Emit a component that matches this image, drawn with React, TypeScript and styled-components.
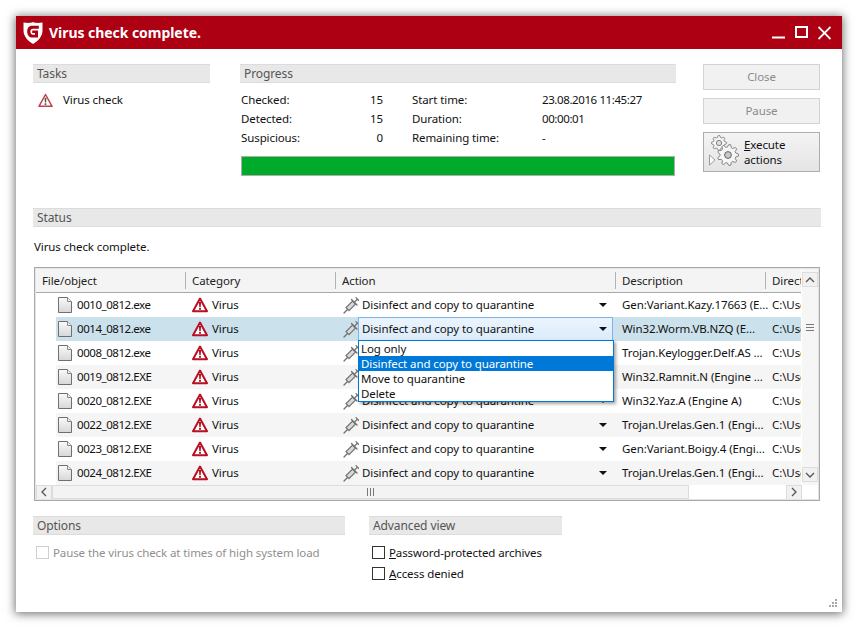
import React from "react";
import styled, { createGlobalStyle, css } from "styled-components";

const Global = createGlobalStyle`
  html, body { margin: 0; padding: 0; background: #fff; }
  body { font-family: "Noto Sans", "Open Sans", "Liberation Sans", sans-serif; font-size: 11.5px; letter-spacing: -0.1px; color: #111; }
  * { box-sizing: border-box; }
`;

const Page = styled.div`
  width: 858px;
  height: 628px;
  padding: 16px;
  overflow: hidden;
`;
const Win = styled.div`
  width: 826px;
  height: 596px;
  background: #fff;
  box-shadow: 0 1px 9px 1px rgba(0, 0, 0, 0.55);
  display: flex;
  flex-direction: column;
  position: relative;
`;
const TitleBar = styled.div`
  height: 33px;
  background: #ae0013;
  display: flex;
  align-items: center;
  padding: 0 11px 0 7px;
  color: #fff;
`;
const TitleText = styled.div`
  font-weight: 700;
  font-size: 14px;
  margin-left: 6px;
  flex: 1;
  letter-spacing: -0.05px;
`;
const WinBtns = styled.div`
  display: flex;
  align-items: center;
  gap: 10px;
`;
const Body = styled.div`
  flex: 1;
  padding: 15px 21px 0 17px;
  display: flex;
  flex-direction: column;
`;
const Top = styled.div`
  display: grid;
  grid-template-columns: 177px 436px 117px;
  column-gap: 30px;
  height: 144px;
`;
const RightCol = styled.div`
  width: 117px;
  margin-left: -3px;
`;
const SectionHead = styled.div<{ $w?: number }>`
  height: 19px;
  line-height: 17px;
  background: #e8e8e8;
  border-top: 1px solid #dcdcdc;
  border-bottom: 1px solid #dcdcdc;
  color: #555;
  padding-left: 4px;
  font-size: 12px;
  ${(p) => p.$w && css`width: ${p.$w}px;`}
`;
const TaskRow = styled.div`
  display: flex;
  align-items: center;
  height: 16px;
  margin: 9px 0 0 5px;
  gap: 10px;
`;
const CellText = styled.span<{ $tight?: boolean }>`
  margin-bottom: 2px;
  ${(p) => p.$tight && css`letter-spacing: -0.45px;`}
`;
const Stats = styled.div`
  display: grid;
  grid-template-columns: 100px 42px 159px 1fr;
  grid-auto-rows: 19px;
  margin: 7px 0 0 1px;
  line-height: 19px;
`;
const Num = styled.div`
  text-align: right;
`;
const Gap = styled.div`
  padding-left: 29px;
`;
const Tight = styled.div`
  letter-spacing: -0.4px;
`;
const Bar = styled.div`
  height: 20px;
  width: 434px;
  margin: 9px 0 0 1px;
  border: 1px solid #adadad;
  background: #00ab2b;
`;
const Buttons = styled.div`
  display: flex;
  flex-direction: column;
  gap: 8px;
`;
const Btn = styled.div`
  height: 26px;
  background: #f1f1f1;
  border: 1px solid #d3d3d3;
  color: #8b8b8b;
  display: flex;
  align-items: center;
  justify-content: center;
  padding-bottom: 1px;
`;
const ExecBtn = styled.div`
  height: 40px;
  background: linear-gradient(#f4f4f4, #e4e4e4);
  border: 1px solid #adadad;
  display: flex;
  align-items: center;
  padding-left: 4px;
  line-height: 15px;
  gap: 5px;
`;
const U = styled.span`
  text-decoration: underline;
  text-underline-offset: 1px;
`;
const StatusText = styled.div`
  height: 40px;
  line-height: 40px;
  padding-left: 1px;
`;
const TableFrame = styled.div`
  margin-left: 1px;
  width: 786px;
  height: 234px;
  border: 1px solid #a9a9a9;
  outline: 1px solid #e4e4e4;
  outline-offset: -2px;
  padding: 1px;
  display: grid;
  grid-template-columns: 766px 16px;
  grid-template-rows: 216px 14px;
  background: #fff;
  position: relative;
`;
const View = styled.div`
  overflow: hidden;
  width: 765px;
`;
const Grid = styled.div`
  width: 840px;
`;
const HeadRow = styled.div`
  display: flex;
  height: 24px;
  background: #f4f4f4;
  border-bottom: 1px solid #a9a9a9;
  color: #222;
`;
const HCell = styled.div<{ $w: number }>`
  width: ${(p) => p.$w}px;
  padding-left: 6px;
  line-height: 23px;
  position: relative;
  flex: none;
  &::after {
    content: "";
    position: absolute;
    right: 0;
    top: 3px;
    bottom: 3px;
    width: 1px;
    background: #b4b4b4;
  }
`;
const Row = styled.div<{ $alt?: boolean; $sel?: boolean }>`
  display: flex;
  height: 24px;
  margin-left: 20px;
  align-items: center;
  background: ${(p) => (p.$sel ? "#cbe1ec" : p.$alt ? "#f5f5f5" : "#fff")};
`;
const FileCell = styled.div`
  width: 130px;
  flex: none;
  display: flex;
  align-items: center;
  gap: 5px;
  padding-left: 2px;
`;
const CatCell = styled.div`
  width: 150px;
  flex: none;
  display: flex;
  align-items: center;
  gap: 4px;
  padding-left: 6px;
`;
const ActCell = styled.div`
  width: 280px;
  flex: none;
  display: flex;
  align-items: center;
  padding-left: 7px;
  gap: 3px;
  position: relative;
  height: 100%;
`;
const Combo = styled.div<{ $open?: boolean }>`
  width: ${(p) => (p.$open ? 255 : 252)}px;
  height: 24px;
  display: flex;
  align-items: center;
  padding-left: ${(p) => (p.$open ? 3 : 0)}px;
  margin-left: ${(p) => (p.$open ? -4 : 0)}px;
  justify-content: space-between;
  padding-right: ${(p) => (p.$open ? 5 : 7)}px;
  background: ${(p) => (p.$open ? "linear-gradient(#eaf4fd, #dcecfb)" : "transparent")};
  border: ${(p) => (p.$open ? "1px solid #7eb4ea" : "0")};
`;
const Caret = styled.span`
  width: 0;
  height: 0;
  border-left: 4px solid transparent;
  border-right: 4px solid transparent;
  border-top: 4px solid #111;
`;
const DescCell = styled.div`
  width: 150px;
  flex: none;
  padding-left: 6px;
  white-space: nowrap;
  margin-bottom: 2px;
`;
const DirCell = styled.div`
  padding-left: 6px;
  white-space: nowrap;
  margin-bottom: 2px;
`;
const Popup = styled.div`
  position: absolute;
  left: 323px;
  top: 72px;
  width: 256px;
  height: 62px;
  background: #fff;
  border: 1px solid #0078d7;
  box-shadow: 2px 2px 3px rgba(0, 0, 0, 0.35);
  z-index: 3;
`;
const Opt = styled.div<{ $on?: boolean }>`
  height: 15px;
  line-height: 15px;
  padding-left: 2px;
  background: ${(p) => (p.$on ? "#0078d7" : "transparent")};
  color: ${(p) => (p.$on ? "#fff" : "#111")};
`;
const VBar = styled.div`
  grid-row: 1;
  grid-column: 2;
  display: flex;
  flex-direction: column;
  align-items: center;
  background: #f6f6f6;
  padding: 3px 0;
`;
const SBtn = styled.div<{ $w?: number }>`
  width: ${(p) => p.$w || 16}px;
  height: 15px;
  background: #f1f1f1;
  border: 1px solid #dcdcdc;
  display: flex;
  align-items: center;
  justify-content: center;
  flex: none;
`;
const Grip = styled.div`
  flex: 1;
  width: 100%;
  display: flex;
  align-items: flex-start;
  justify-content: center;
  padding-top: 37px;
`;
const HBar = styled.div`
  grid-row: 2;
  grid-column: 1 / span 2;
  display: flex;
  align-items: center;
  width: 766px;
  height: 14px;
  background: #f5f5f5;
`;
const HTrack = styled.div`
  width: 637px;
  height: 14px;
  background: #f3f3f3;
  border: 1px solid #dcdcdc;
  display: flex;
  align-items: center;
  justify-content: center;
`;
const HRest = styled.div`
  flex: 1;
  height: 14px;
  background: #fff;
`;
const Bottom = styled.div`
  display: flex;
  margin-top: 15px;
  gap: 24px;
`;
const Col = styled.div<{ $w: number }>`
  width: ${(p) => p.$w}px;
`;
const Checks = styled.div`
  margin-top: 7px;
`;
const Check = styled.div<{ $off?: boolean }>`
  display: flex;
  align-items: center;
  gap: 4px;
  height: 21px;
  margin-left: 3px;
  color: ${(p) => (p.$off ? "#8f8f8f" : "#111")};
`;
const Box = styled.span<{ $off?: boolean }>`
  width: 13px;
  height: 13px;
  background: #fff;
  border: 1px solid ${(p) => (p.$off ? "#cfcfcf" : "#333")};
  flex: none;
`;
const Resize = styled.svg`
  position: absolute;
  right: 4px;
  bottom: 4px;
`;

const Logo = () => (
  <svg width="20" height="22" viewBox="0 0 20 22" style={{ flex: "none" }}>
    <path fill="#fff" fillRule="evenodd" d="M0.5 0.5 C5 1.2 8 1 10 0 C12 1 15 1.2 19.5 0.5 L19.5 8.5 C19.5 14.5 15 19 10 22 C5 19 0.5 14.5 0.5 8.5 Z M15.8 3.8 L9 3.8 C5.8 3.8 4.2 6.2 4.2 9.5 C4.2 13.2 6.3 15.6 9.5 15.6 L15 15.6 L15 8.4 L9.2 8.4 L9.2 11 L12 11 L12 12.8 L10 12.8 C8.2 12.8 7.4 11.4 7.4 9.6 C7.4 7.8 8.3 6.8 10 6.8 L15.8 6.8 Z" />
  </svg>
);
const Warn = ({ s = 16, light = false }: { s?: number; light?: boolean }) => (
  <svg width={s} height={s} viewBox="0 0 16 16" style={{ flex: "none" }}>
    <path d="M8 1.6 L15 14.2 L1 14.2 Z" fill="#fff" stroke={light ? "#c2404c" : "#b80f22"} strokeWidth={light ? 1.6 : 2} strokeLinejoin="round" />
    <path d="M7 5 h2 l-.3 5.2 h-1.4 Z M7.1 11 h1.8 v1.7 h-1.8 Z" fill={light ? "#555" : "#a30d1d"} />
  </svg>
);
const FileIcon = () => (
  <svg width="14" height="16" viewBox="0 0 14 16" style={{ flex: "none" }}>
    <defs>
      <linearGradient id="fg" x1="0" y1="0" x2="0" y2="1">
        <stop offset="0" stopColor="#fbfbfb" />
        <stop offset="1" stopColor="#d6d6d6" />
      </linearGradient>
    </defs>
    <path d="M.5.5 H9.5 L13.5 4.5 V15.5 H.5 Z" fill="url(#fg)" stroke="#6f6f6f" />
    <path d="M9.5.5 V4.5 H13.5" fill="#eee" stroke="#8a8a8a" />
  </svg>
);
const Syringe = () => (
  <svg width="16" height="18" viewBox="0 0 16 18" style={{ flex: "none" }}>
    <g fill="none" stroke="#707070" strokeLinecap="round" strokeLinejoin="round">
      <path d="M1 17 L4.5 13.5" strokeWidth="1.3" />
      <path d="M3 11.6 L9.5 5.1 L12.5 8.1 L6 14.6 Z" fill="#d8d8d8" strokeWidth="1.3" />
      <path d="M8.5 3.6 L14 9.1" strokeWidth="1.4" />
      <path d="M11.5 6.1 L14.4 3.2 M13 1.6 L16 4.6" strokeWidth="1.3" />
    </g>
  </svg>
);
const gearPath = (cx: number, cy: number, r: number, n: number) => {
  let d = "";
  for (let i = 0; i < n * 2; i++) {
    const rad = i % 2 === 0 ? r : r * 0.76;
    for (const off of [-0.28, 0.28]) {
      const a = ((i + off) * Math.PI) / n;
      d += `${d ? "L" : "M"}${(cx + rad * Math.cos(a)).toFixed(2)} ${(cy + rad * Math.sin(a)).toFixed(2)} `;
    }
  }
  return d + "Z";
};
const Gears = () => (
  <svg width="31" height="34" viewBox="0 0 31 34" style={{ flex: "none" }}>
    <path d={gearPath(11, 8, 7.5, 8)} fill="#f4f4f4" stroke="#8a8a8a" />
    <circle cx="11" cy="8" r="2.6" fill="#e0e0e0" stroke="#808080" />
    <path d={gearPath(20, 20, 10.5, 9)} fill="#f6f6f6" stroke="#848484" />
    <circle cx="20" cy="20" r="3.4" fill="#c8c8c8" stroke="#666" />
    <path d="M1.5 20 L7 25 L1.5 30 Z" fill="#fff" stroke="#9c9c9c" />
  </svg>
);
const Chev = ({ d }: { d: string }) => (
  <svg width="10" height="10" viewBox="0 0 10 10">
    <path d={d} fill="none" stroke="#555" strokeWidth="1.3" />
  </svg>
);

const rows = [
  ["0010_0812.exe", "Gen:Variant.Kazy.17663 (E..."],
  ["0014_0812.exe", "Win32.Worm.VB.NZQ (E..."],
  ["0008_0812.exe", "Trojan.Keylogger.Delf.AS ..."],
  ["0019_0812.EXE", "Win32.Ramnit.N (Engine ..."],
  ["0020_0812.EXE", "Win32.Yaz.A (Engine A)"],
  ["0022_0812.EXE", "Trojan.Urelas.Gen.1 (Engi..."],
  ["0023_0812.EXE", "Gen:Variant.Boigy.4 (Engi..."],
  ["0024_0812.EXE", "Trojan.Urelas.Gen.1 (Engi..."],
];

export default function App() {
  return (
    <Page>
      <Global />
      <Win>
        <TitleBar>
          <Logo />
          <TitleText>Virus check complete.</TitleText>
          <WinBtns>
            <svg width="13" height="13" viewBox="0 0 13 13"><path d="M0 11.5 H13" stroke="#fff" strokeWidth="2" /></svg>
            <svg width="13" height="13" viewBox="0 0 13 13"><rect x="1" y="1" width="11" height="10" fill="none" stroke="#fff" strokeWidth="2" /></svg>
            <svg width="13" height="14" viewBox="0 0 13 14"><path d="M.5 1 L12.5 13 M12.5 1 L.5 13" stroke="#fff" strokeWidth="1.8" /></svg>
          </WinBtns>
        </TitleBar>
        <Body>
          <Top>
            <div>
              <SectionHead>Tasks</SectionHead>
              <TaskRow><Warn s={15} light /><CellText>Virus check</CellText></TaskRow>
            </div>
            <div>
              <SectionHead>Progress</SectionHead>
              <Stats>
                <div>Checked:</div><Num>15</Num><Gap>Start time:</Gap><Tight>23.08.2016 11:45:27</Tight>
                <div>Detected:</div><Num>15</Num><Gap>Duration:</Gap><Tight>00:00:01</Tight>
                <div>Suspicious:</div><Num>0</Num><Gap>Remaining time:</Gap><Tight>-</Tight>
              </Stats>
              <Bar />
            </div>
            <RightCol>
              <Buttons>
                <Btn>Close</Btn>
                <Btn>Pause</Btn>
                <ExecBtn>
                  <Gears />
                  <div>
                    <div><U>E</U>xecute</div>
                    <div>actions</div>
                  </div>
                </ExecBtn>
              </Buttons>
            </RightCol>
          </Top>
          <SectionHead>Status</SectionHead>
          <StatusText>Virus check complete.</StatusText>
          <TableFrame>
            <View>
              <Grid>
                <HeadRow>
                  <HCell $w={150}>File/object</HCell>
                  <HCell $w={150}>Category</HCell>
                  <HCell $w={280}>Action</HCell>
                  <HCell $w={150}>Description</HCell>
                  <HCell $w={110}>Directory</HCell>
                </HeadRow>
                {rows.map(([f, d], i) => (
                  <Row key={f} $sel={i === 1} $alt={i % 2 === 1}>
                    <FileCell><FileIcon /><CellText $tight>{f}</CellText></FileCell>
                    <CatCell><Warn /><CellText>Virus</CellText></CatCell>
                    <ActCell>
                      <Syringe />
                      <Combo $open={i === 1}>
                        <CellText>Disinfect and copy to quarantine</CellText>
                        <Caret />
                      </Combo>
                    </ActCell>
                    <DescCell>{d}</DescCell>
                    <DirCell>C:\Users</DirCell>
                  </Row>
                ))}
              </Grid>
            </View>
            <VBar>
              <SBtn><Chev d="M1 7 L5 3 L9 7" /></SBtn>
              <Grip>
                <svg width="8" height="7" viewBox="0 0 8 7"><path d="M0 .5 H8 M0 3.5 H8 M0 6.5 H8" stroke="#777" /></svg>
              </Grip>
              <SBtn><Chev d="M1 3 L5 7 L9 3" /></SBtn>
            </VBar>
            <HBar>
              <SBtn $w={16}><Chev d="M7 1 L3 5 L7 9" /></SBtn>
              <HTrack>
                <svg width="9" height="8" viewBox="0 0 9 8"><path d="M1.5 0 V8 M4.5 0 V8 M7.5 0 V8" stroke="#777" /></svg>
              </HTrack>
              <HRest />
              <SBtn $w={16}><Chev d="M3 1 L7 5 L3 9" /></SBtn>
            </HBar>
            <Popup>
              <Opt>Log only</Opt>
              <Opt $on>Disinfect and copy to quarantine</Opt>
              <Opt>Move to quarantine</Opt>
              <Opt>Delete</Opt>
            </Popup>
          </TableFrame>
          <Bottom>
            <Col $w={312}>
              <SectionHead>Options</SectionHead>
              <Checks>
                <Check $off><Box $off />Pause the virus check at times of high system load</Check>
              </Checks>
            </Col>
            <Col $w={193}>
              <SectionHead>Advanced view</SectionHead>
              <Checks>
                <Check><Box /><span><U>P</U>assword-protected archives</span></Check>
                <Check><Box /><span><U>A</U>ccess denied</span></Check>
              </Checks>
            </Col>
          </Bottom>
        </Body>
        <Resize width="10" height="10" viewBox="0 0 10 10">
          <path d="M7 1h2v2H7zM4 4h2v2H4zM7 4h2v2H7zM1 7h2v2H1zM4 7h2v2H4zM7 7h2v2H7z" fill="#a8a8a8" />
        </Resize>
      </Win>
    </Page>
  );
}
